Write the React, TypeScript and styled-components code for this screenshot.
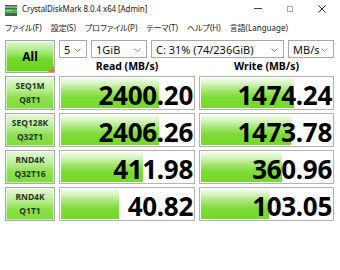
import React from "react";
import styled, {createGlobalStyle} from "styled-components";

const GlobalStyle = createGlobalStyle`
  html, body {
    margin: 0;
    padding: 0;
    background: #ffffff;
  }
  body {
    font-family: "Noto Sans", "Noto Sans CJK JP", sans-serif;
    color: #000;
  }
`

const rows = [
    {l1: 'SEQ1M', l2: 'Q8T1', read: '2400.20', rp: 73, write: '1474.24', wp: 70},
    {l1: 'SEQ128K', l2: 'Q32T1', read: '2406.26', rp: 73, write: '1473.78', wp: 68},
    {l1: 'RND4K', l2: 'Q32T16', read: '411.98', rp: 61, write: '360.96', wp: 61},
    {l1: 'RND4K', l2: 'Q1T1', read: '40.82', rp: 43, write: '103.05', wp: 51},
]

const menuItems = ['ファイル(F)', '設定(S)', 'プロファイル(P)', 'テーマ(T)', 'ヘルプ(H)', '言語(Language)']

const Window = styled.div`
  width: 340px;
  height: 270px;
  background: #ffffff;
  overflow: hidden;
`

const TitleBar = styled.div`
  height: 20px;
  display: flex;
  align-items: center;
  padding-left: 5px;
`

const Title = styled.span`
  margin-left: 5px;
  font-size: 8px;
  letter-spacing: -0.1px;
  color: #1a1a1a;
  margin-top: -3px;
`

const Controls = styled.div`
  margin-left: auto;
  display: flex;
  align-items: center;
  height: 100%;
  padding-right: 2px;
`

const ControlButton = styled.div`
  width: 32px;
  height: 100%;
  display: flex;
  align-items: center;
  justify-content: center;
  margin-top: -3px;
`

const MenuBar = styled.div`
  height: 14px;
  display: flex;
  align-items: center;
  gap: 9px;
  padding-left: 5px;
  font-size: 8px;
  font-feature-settings: "palt";
  color: #1a1a1a;
`

const Main = styled.div`
  display: grid;
  grid-template-columns: 50px 136px 135px;
  column-gap: 4px;
  row-gap: 3px;
  padding: 6px 0 0 5px;
`

const AllButton = styled.div`
  grid-row: span 2;
  height: 33px;
  position: relative;
  border: 1px solid #a8a8a8;
  box-sizing: border-box;
  background: linear-gradient(#e4f9d6 0%, #a6e878 35%, #74d82c 60%, #66d21a 100%);
  display: flex;
  align-items: center;
  justify-content: center;
  font-weight: 700;
  font-size: 12px;
  box-shadow: inset 0 0 0 1px rgba(255, 255, 255, 0.6);

  &::after {
    content: "";
    position: absolute;
    right: 0;
    bottom: 0;
    border-style: solid;
    border-width: 0 0 6px 6px;
    border-color: transparent transparent #f07a14 transparent;
  }
`

const ComboRow = styled.div`
  grid-column: 2 / span 2;
  display: flex;
  gap: 4px;
  height: 18px;
`

const Combo = styled.div<{ $w: number }>`
  width: ${p => p.$w}px;
  box-sizing: border-box;
  border: 1px solid #a9a9a9;
  background: #fff;
  display: flex;
  align-items: center;
  padding-left: 4px;
  font-size: 11px;
  position: relative;
  color: #111;

  svg {
    position: absolute;
    right: 5px;
    top: 7px;
  }
`

const Header = styled.div`
  font-size: 10.5px;
  font-weight: 700;
  text-align: center;
  line-height: 12px;
  margin-top: -2px;
`

const Label = styled.div`
  height: 34px;
  box-sizing: border-box;
  border: 1px solid #a8a8a8;
  background: linear-gradient(#e8fadc 0%, #b8ec94 40%, #8ce04c 65%, #80dc3c 100%);
  box-shadow: inset 0 0 0 1px rgba(255, 255, 255, 0.55);
  display: flex;
  flex-direction: column;
  align-items: center;
  justify-content: center;
  font-size: 8.5px;
  font-weight: 700;
  line-height: 14px;
  color: #263826;
`

const Cell = styled.div`
  height: 34px;
  box-sizing: border-box;
  border: 1px solid #b4b4b4;
  background: #fff;
  position: relative;
  display: flex;
  align-items: center;
  justify-content: flex-end;
  padding: 4px 1px 0 0;
`

const Bar = styled.div`
  position: absolute;
  left: 1px;
  top: 1px;
  bottom: 1px;
  background: linear-gradient(#f6fdf1 0%, #d2f3ba 20%, #9ee468 45%, #7ddb36 65%, #76d82c 100%);
`

const Value = styled.span`
  position: relative;
  font-size: 26px;
  font-weight: 700;
  line-height: 26px;
  letter-spacing: -0.3px;
`

function Chevron() {
    return (
        <svg width="7" height="4" viewBox="0 0 7 4">
            <path d="M0.5 0.5 L3.5 3.5 L6.5 0.5" fill="none" stroke="#8a8a8a" strokeWidth="0.9"/>
        </svg>
    )
}

function AppIcon() {
    return (
        <svg width="12" height="11" viewBox="0 0 12 11">
            <rect x="0" y="0" width="12" height="11" fill="#5a5a5a"/>
            <rect x="0" y="1" width="12" height="2" fill="#9a9a9a"/>
            <rect x="0" y="4" width="12" height="4" fill="#3ec43e"/>
            <rect x="1" y="5" width="6" height="1" fill="#7ee07e"/>
        </svg>
    )
}

export default function App() {
    return (
        <Window>
            <GlobalStyle/>
            <TitleBar>
                <AppIcon/>
                <Title>CrystalDiskMark 8.0.4 x64 [Admin]</Title>
                <Controls>
                    <ControlButton>
                        <svg width="8" height="1" viewBox="0 0 8 1">
                            <rect width="8" height="1" fill="#444"/>
                        </svg>
                    </ControlButton>
                    <ControlButton>
                        <svg width="6" height="6" viewBox="0 0 6 6">
                            <rect x="0.5" y="0.5" width="5" height="5" fill="none" stroke="#aaa" strokeWidth="1"/>
                        </svg>
                    </ControlButton>
                    <ControlButton>
                        <svg width="8" height="8" viewBox="0 0 8 8">
                            <path d="M0.5 0.5 L7.5 7.5 M7.5 0.5 L0.5 7.5" stroke="#333" strokeWidth="1"/>
                        </svg>
                    </ControlButton>
                </Controls>
            </TitleBar>
            <MenuBar>
                {menuItems.map(m => <span key={m}>{m}</span>)}
            </MenuBar>
            <Main>
                <AllButton>All</AllButton>
                <ComboRow>
                    <Combo $w={28}>5<Chevron/></Combo>
                    <Combo $w={56}>1GiB<Chevron/></Combo>
                    <Combo $w={133}>C: 31% (74/236GiB)<Chevron/></Combo>
                    <Combo $w={46}>MB/s<Chevron/></Combo>
                </ComboRow>
                <Header>Read (MB/s)</Header>
                <Header>Write (MB/s)</Header>
                {rows.map(r => (
                    <React.Fragment key={r.l2}>
                        <Label><span>{r.l1}</span><span>{r.l2}</span></Label>
                        <Cell>
                            <Bar style={{width: `${r.rp}%`}}/>
                            <Value>{r.read}</Value>
                        </Cell>
                        <Cell>
                            <Bar style={{width: `${r.wp}%`}}/>
                            <Value>{r.write}</Value>
                        </Cell>
                    </React.Fragment>
                ))}
            </Main>
        </Window>
    )
}
